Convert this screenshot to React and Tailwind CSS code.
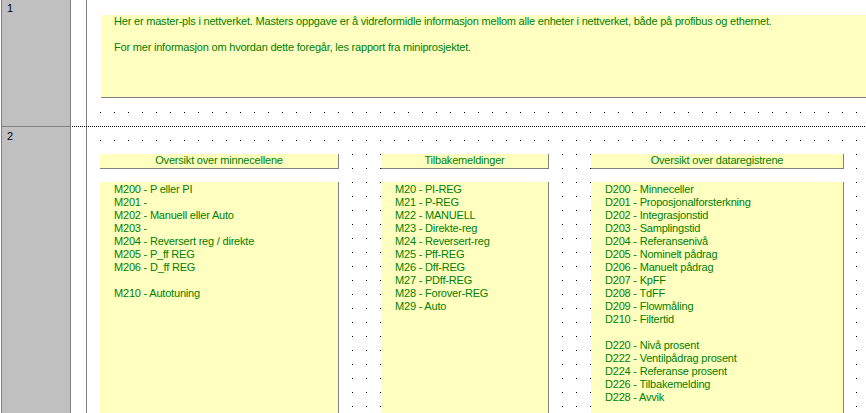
import React from "react";

const mCells = [
  "M200 - P eller PI",
  "M201 -",
  "M202 - Manuell eller Auto",
  "M203 -",
  "M204 - Reversert reg / direkte",
  "M205 - P_ff REG",
  "M206 - D_ff REG",
  "",
  "M210 - Autotuning",
];

const feedback = [
  "M20 - PI-REG",
  "M21 - P-REG",
  "M22 - MANUELL",
  "M23 - Direkte-reg",
  "M24 - Reversert-reg",
  "M25 - Pff-REG",
  "M26 - Dff-REG",
  "M27 - PDff-REG",
  "M28 - Forover-REG",
  "M29 - Auto",
];

const dataRegs = [
  "D200 - Minneceller",
  "D201 - Proposjonalforsterkning",
  "D202 - Integrasjonstid",
  "D203 - Samplingstid",
  "D204 - Referansenivå",
  "D205 - Nominelt pådrag",
  "D206 - Manuelt pådrag",
  "D207 - KpFF",
  "D208 - TdFF",
  "D209 - Flowmåling",
  "D210 - Filtertid",
  "",
  "D220 - Nivå prosent",
  "D222 - Ventilpådrag prosent",
  "D224 - Referanse prosent",
  "D226 - Tilbakemelding",
  "D228 - Avvik",
];

const Panel = ({ title, items, width }) => (
  <div className={`${width} shrink-0 flex flex-col`}>
    <div className="h-[15px] bg-[#ffffc0] border-r border-b border-[#808080] text-center text-[#008000]">
      {title}
    </div>
    <div className="mt-[13px] flex-1 bg-[#ffffc0] border-r border-[#808080] pt-px pl-[14px] text-[#008000]">
      {items.map((t, i) => (
        <div key={i} className="h-[13px] whitespace-nowrap">
          {t}
        </div>
      ))}
    </div>
  </div>
);

export default function App() {
  return (
    <div className="w-[866px] h-[413px] overflow-hidden bg-white flex font-['Liberation_Sans',Arial,sans-serif] text-[11px] leading-[13px] tracking-[-0.2px]">
      {/* row numbers */}
      <div className="ml-px w-[70px] shrink-0 border-x border-[#808080] bg-[#c0c0c0] flex flex-col text-black">
        <div className="h-[126px] pl-[5px] pt-[2px]">1</div>
        <div className="flex-1 border-t border-[#808080] pl-[5px] pt-[3px]">2</div>
      </div>

      <div className="flex-1 flex flex-col min-w-0">
        {/* section 1 */}
        <div className="h-[126px] flex">
          <div className="w-[15px] shrink-0" />
          <div className="flex-1 border-l border-[#808080] flex flex-col min-w-0">
            <div className="mt-[15px] ml-[14px] h-[83px] bg-[#ffffc0] border-b border-[#808080] pl-[13px] text-[#008000] whitespace-nowrap">
              <div>
                Her er master-pls i nettverket. Masters oppgave er å vidreformidle informasjon mellom alle enheter i
                nettverket, både på profibus og ethernet.
              </div>
              <div className="h-[13px]" />
              <div>For mer informasjon om hvordan dette foregår, les rapport fra miniprosjektet.</div>
            </div>
            <div className="mt-[14px] h-px bg-[linear-gradient(to_right,#000_1px,transparent_1px)] bg-[length:14px_1px] bg-[position:13px_0]" />
          </div>
        </div>

        {/* dotted divider */}
        <div className="h-px ml-px bg-[linear-gradient(to_right,#000_50%,transparent_50%)] bg-[length:2px_1px]" />

        {/* section 2 */}
        <div className="flex-1 flex min-h-0">
          <div className="w-[15px] shrink-0" />
          <div className="flex-1 border-l border-[#808080] flex gap-[42px] pl-[13px] pt-[27px] bg-[conic-gradient(at_1px_1px,transparent_75%,#000_0)] bg-[length:14px_14px] bg-[position:13px_13px]">
            <Panel title="Oversikt over minnecellene" items={mCells} width="w-[239px]" />
            <Panel title="Tilbakemeldinger" items={feedback} width="w-[168px]" />
            <Panel title="Oversikt over dataregistrene" items={dataRegs} width="w-[253px]" />
          </div>
        </div>
      </div>
    </div>
  );
}
